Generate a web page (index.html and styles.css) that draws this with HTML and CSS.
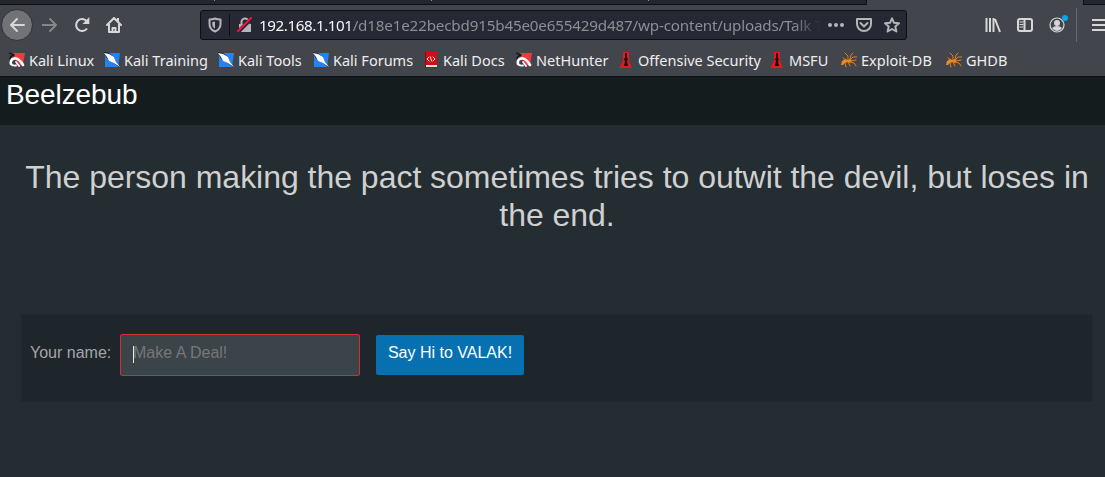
FILE: index.html
```html
<!DOCTYPE html>
<html lang="en">
<head>
<meta charset="utf-8">
<title>Beelzebub</title>
<link rel="stylesheet" href="styles.css">
</head>
<body>
<svg class="defs" aria-hidden="true">
  <symbol id="kali" viewBox="0 0 16 16"><path d="M4 1h12l-2 12-5 1z" fill="#f23a3c"/><path d="M0 1l5 2M1 7q0-3 4-4" stroke="#17181c" stroke-width="1.5" fill="none"/><path d="M2 12C1 8 4 6 7 6.500c3 .5 5 3 7 6.500" stroke="#fff" stroke-width="2.600" fill="none"/><path d="M5 11q1-3 3-1l2 3-2 1z" fill="#6a102e"/><path d="M2 12q1 2 5 1.500M7 10l3 4" stroke="#fff" stroke-width="1.800" fill="none"/></symbol>
  <symbol id="knife" viewBox="0 0 16 16"><path d="M1 1h15l-2 14H1z" fill="#2383f5"/><path d="M0 0l5 1 5 4 2 5 3 5-5-4-5-2-3-4z" fill="#17202b"/><path d="M0 1l5 1 5 3 2 5 4 5-6-4-5-2-2-4z" fill="#fff"/></symbol>
  <symbol id="docs" viewBox="0 0 16 16"><path d="M2 0h12v14H2z" fill="#d20d16"/><path d="M2 0h1v15H2z" fill="#8d0710"/><path d="M3 13h11v2H3z" fill="#e4dcdc"/><path d="M2 15h12v1H2z" fill="#a50812"/><path d="M6 5L4 7l2 2M10 5l2 2-2 2M7.500 5l1 4" stroke="#fff" stroke-width=".9" fill="none"/></symbol>
  <symbol id="offsec" viewBox="0 0 16 16"><path d="M5 0h6v9l3 7H1l4-7z" fill="#e21a1e"/><path d="M7 1h2v5l1 1-1 2 1 5H6l1-5-1-2 1-1z" fill="#260608"/></symbol>
  <symbol id="bug" viewBox="0 0 16 16"><path d="M0 13l1-4 3-2 3 1 2-1 2 1-2 3-2-1-3 1-2 2z" fill="#f08a1c"/><path d="M5 8L2 6M7 8V4L4 1M9 8l1-5 2-2M9 8l3-3h4M10 9l5-1M9 10l4 1 2 3M7 10l2 4M4 11l1 4" fill="none" stroke="#e07f1a" stroke-width="1"/></symbol>
</svg>
<div class="tabs"><i></i><i></i><i></i><span class="tab-active"></span></div>
<div class="toolbar">
  <div class="back"><svg viewBox="0 0 16 16"><path d="M15 8H2M8 2L2 8l6 6"/></svg></div>
  <svg class="forward" viewBox="0 0 16 16"><path d="M0 8h14M8 2l6 6-6 6"/></svg>
  <svg class="reload" viewBox="0 0 16 16"><path d="M13 11.500A6 6 0 1 1 13 4.500"/><path class="solid" d="M15.300 0v7H8.500z"/></svg>
  <svg class="home" viewBox="0 0 16 16"><path d="M1 8l7-7 7 7M3 7v8h10V7M6.500 15v-4h3v4"/><path class="solid" d="M11 1h2v4h-2z"/></svg>
  <div class="urlbar">
    <svg viewBox="0 0 16 16"><path d="M8 1.500c2 1 4 1 5.500 1V7c0 4-2 6-5.500 7.500C4.500 13 2.500 11 2.500 7V2.500c1.500 0 3.500 0 5.500-1z"/><path class="solid" d="M8 4.500v7.200C6 10.500 5.300 9 5.300 7V5z"/></svg>
    <span class="split"></span>
    <svg viewBox="0 0 16 16"><path d="M4.500 8V5a3.500 3.500 0 0 1 7 0v3"/><path class="solid" d="M2 7h12v8H2z"/><path class="gap" d="M1 15L15 1"/><path class="slash" d="M1 14L14 1"/></svg>
    <div class="url"><b>192.168.1.101</b>/d18e1e22becbd915b45e0e655429d487/wp-content/uploads/Talk T</div>
    <svg class="dots" viewBox="0 0 16 16"><circle cx="2" cy="8" r="2"/><circle cx="8" cy="8" r="2"/><circle cx="14" cy="8" r="2"/></svg>
    <svg class="pocket" viewBox="0 0 16 16"><path d="M1 2h14v5a7 7 0 0 1-14 0zM4.500 6L8 9.500 11.500 6"/></svg>
    <svg class="star" viewBox="0 0 16 16"><path d="M8 1.300l2 4.500 5 .5-3.700 3.300 1.100 4.900L8 12l-4.400 2.500 1.100-4.900L1 6.300l5-.5z"/></svg>
  </div>
  <div class="tools">
    <svg class="library" viewBox="0 0 16 16"><path d="M1.500 1v14M5 1v14M8.500 1v14M10 2l5 13"/></svg>
    <svg viewBox="0 0 16 16"><rect x="1" y="2" width="14" height="12" rx="2"/><path d="M7.500 2v12"/><path class="thin" d="M3 5h3M3 7.500h3M3 10h3"/></svg>
    <div class="account"><svg viewBox="0 0 16 16"><circle class="thin" cx="8" cy="8" r="7"/><circle class="solid" cx="8" cy="6" r="3"/><path class="solid" d="M3 11q2-2 5-2t5 2q-2 3-5 3t-5-3z"/></svg><span class="badge"></span></div>
  </div>
  <span class="sep"></span>
  <svg class="menu" viewBox="0 0 16 16"><path d="M0 3h14M0 8h14M0 13h14"/></svg>
</div>
<div class="bookmarks">
  <span><svg><use href="#kali"/></svg>Kali Linux</span>
  <span><svg><use href="#knife"/></svg>Kali Training</span>
  <span><svg><use href="#knife"/></svg>Kali Tools</span>
  <span><svg><use href="#knife"/></svg>Kali Forums</span>
  <span><svg><use href="#docs"/></svg>Kali Docs</span>
  <span><svg><use href="#kali"/></svg>NetHunter</span>
  <span><svg><use href="#offsec"/></svg>Offensive Security</span>
  <span><svg><use href="#offsec"/></svg>MSFU</span>
  <span><svg><use href="#bug"/></svg>Exploit-DB</span>
  <span><svg><use href="#bug"/></svg>GHDB</span>
</div>
<header class="masthead">Beelzebub</header>
<main>
  <h1>The person making the pact sometimes tries to outwit the devil, but loses in<br>the end.</h1>
  <form class="panel">
    <label for="name">Your name:</label>
    <div class="field"><span class="caret"></span><input id="name" type="text" placeholder="Make A Deal!"></div>
    <button type="button">Say Hi to VALAK!</button>
  </form>
</main>
</body>
</html>
```

FILE: styles.css
```css
* { box-sizing: border-box; }
body { margin: 0; height: 477px; overflow: hidden; background: #232d32; font-family: "Liberation Sans", Arial, sans-serif; }
.defs { display: none; }
svg { flex: none; width: 16px; height: 16px; fill: none; stroke: #d7d7d8; stroke-width: 2; stroke-linecap: round; stroke-linejoin: round; }
.solid { fill: #d7d7d8; stroke: none; }
.thin { stroke-width: 1.2; }

.tabs { display: flex; height: 5px; padding-left: 214px; background: #23252f; border-bottom: 1px solid #0e0f14; }
.tabs i { width: 1px; height: 1px; margin-right: 216px; background: #8a8b90; }
.tab-active { width: 218px; height: 5px; margin-left: 1px; background: #43454c; border: solid #0e0f14; border-width: 0 1px; }

.toolbar { display: flex; align-items: center; height: 41px; padding: 0 0 1px 1px; background: #43454c; }
.back { display: flex; flex: none; align-items: center; justify-content: center; width: 32px; height: 32px; border-radius: 50%; background: #727377; border: 1px solid #303238; }
.forward { margin-left: 9px; stroke: #85868a; }
.reload { margin-left: 16px; stroke-linecap: butt; }
.home { margin-left: 16px; }
.urlbar { display: flex; flex: none; align-items: center; width: 707px; height: 30px; margin-left: 78px; padding-left: 6px; background: #262833; border: 1px solid #0d0e13; border-radius: 3px; }
.urlbar svg { stroke: #b4b5b8; }
.urlbar .solid { fill: #b4b5b8; }
.split { width: 1px; height: 22px; margin: 0 7px 0 6px; background: #0d0e13; }
.urlbar .gap { stroke: #262833; stroke-width: 4; }
.urlbar .slash { stroke: #f5113f; }
.url { width: 562px; margin-left: 6px; white-space: nowrap; font: 15.2px/24px "Noto Sans", sans-serif; letter-spacing: -0.17px; color: #8d8e93; -webkit-mask-image: linear-gradient(to right, #000 95%, transparent 100%); mask-image: linear-gradient(to right, #000 95%, transparent 100%); }
.url b { font-weight: 400; letter-spacing: -0.42px; color: #f7f7f8; }
.urlbar .dots { margin-left: 7px; stroke: none; fill: #b4b5b8; }
.pocket { margin-left: 12px; }
.star { margin-left: 12px; }
.tools { display: flex; flex: none; gap: 16px; margin-left: 78px; }
.tools svg { display: block; }
.library { stroke-linecap: butt; }
.account { position: relative; }
.badge { position: absolute; right: -3px; top: -2px; width: 6px; height: 6px; border-radius: 50%; background: #00a8f8; }
.sep { flex: none; width: 1px; height: 34px; margin-left: 11px; background: #66686d; }
.menu { margin-left: 15px; stroke-linecap: butt; }

.bookmarks { display: grid; grid-template-columns: 95px 114px 95px 110px 93px 102px 151px 72px 105px 100px; align-items: center; height: 31px; padding: 0 0 2px 9px; background: #43454c; border-bottom: 1px solid #0e0f12; font: 14.5px/20px "Noto Sans", sans-serif; color: #eeeeef; }
.bookmarks span { display: flex; align-items: center; gap: 4px; white-space: nowrap; }
.bookmarks svg { stroke: none; }

.masthead { height: 48px; padding: 0 6px; background: #151c1e; color: #fff; font-size: 28px; line-height: 35px; letter-spacing: -0.1px; }
main { padding: 33px 12px 0 21px; }
h1 { margin: 0; text-align: center; white-space: nowrap; font-size: 32px; font-weight: 400; line-height: 38px; letter-spacing: -0.025px; color: #d0d0d0; }
.panel { display: flex; align-items: flex-start; height: 88px; margin-top: 80px; padding: 19px 8px; background: #1e252b; border: 1px solid #20292e; font-size: 16px; }
label { width: 90px; line-height: 38px; color: #a5a5a5; }
.field { position: relative; }
.caret { position: absolute; left: 13px; top: 12px; width: 1px; height: 17px; background: #eee; }
input { display: block; width: 240px; height: 42px; padding: 0 12px 5px; background: #3b4449; border: 1px solid #d22d30; border-radius: 2px; outline: 0; font: inherit; }
input::placeholder { color: #777; opacity: 1; }
button { width: 148px; height: 40px; margin: 1px 0 0 16px; padding: 0 0 5px; border: 0; border-radius: 2px; background: #0670b1; color: #fff; font: inherit; white-space: nowrap; }
```
